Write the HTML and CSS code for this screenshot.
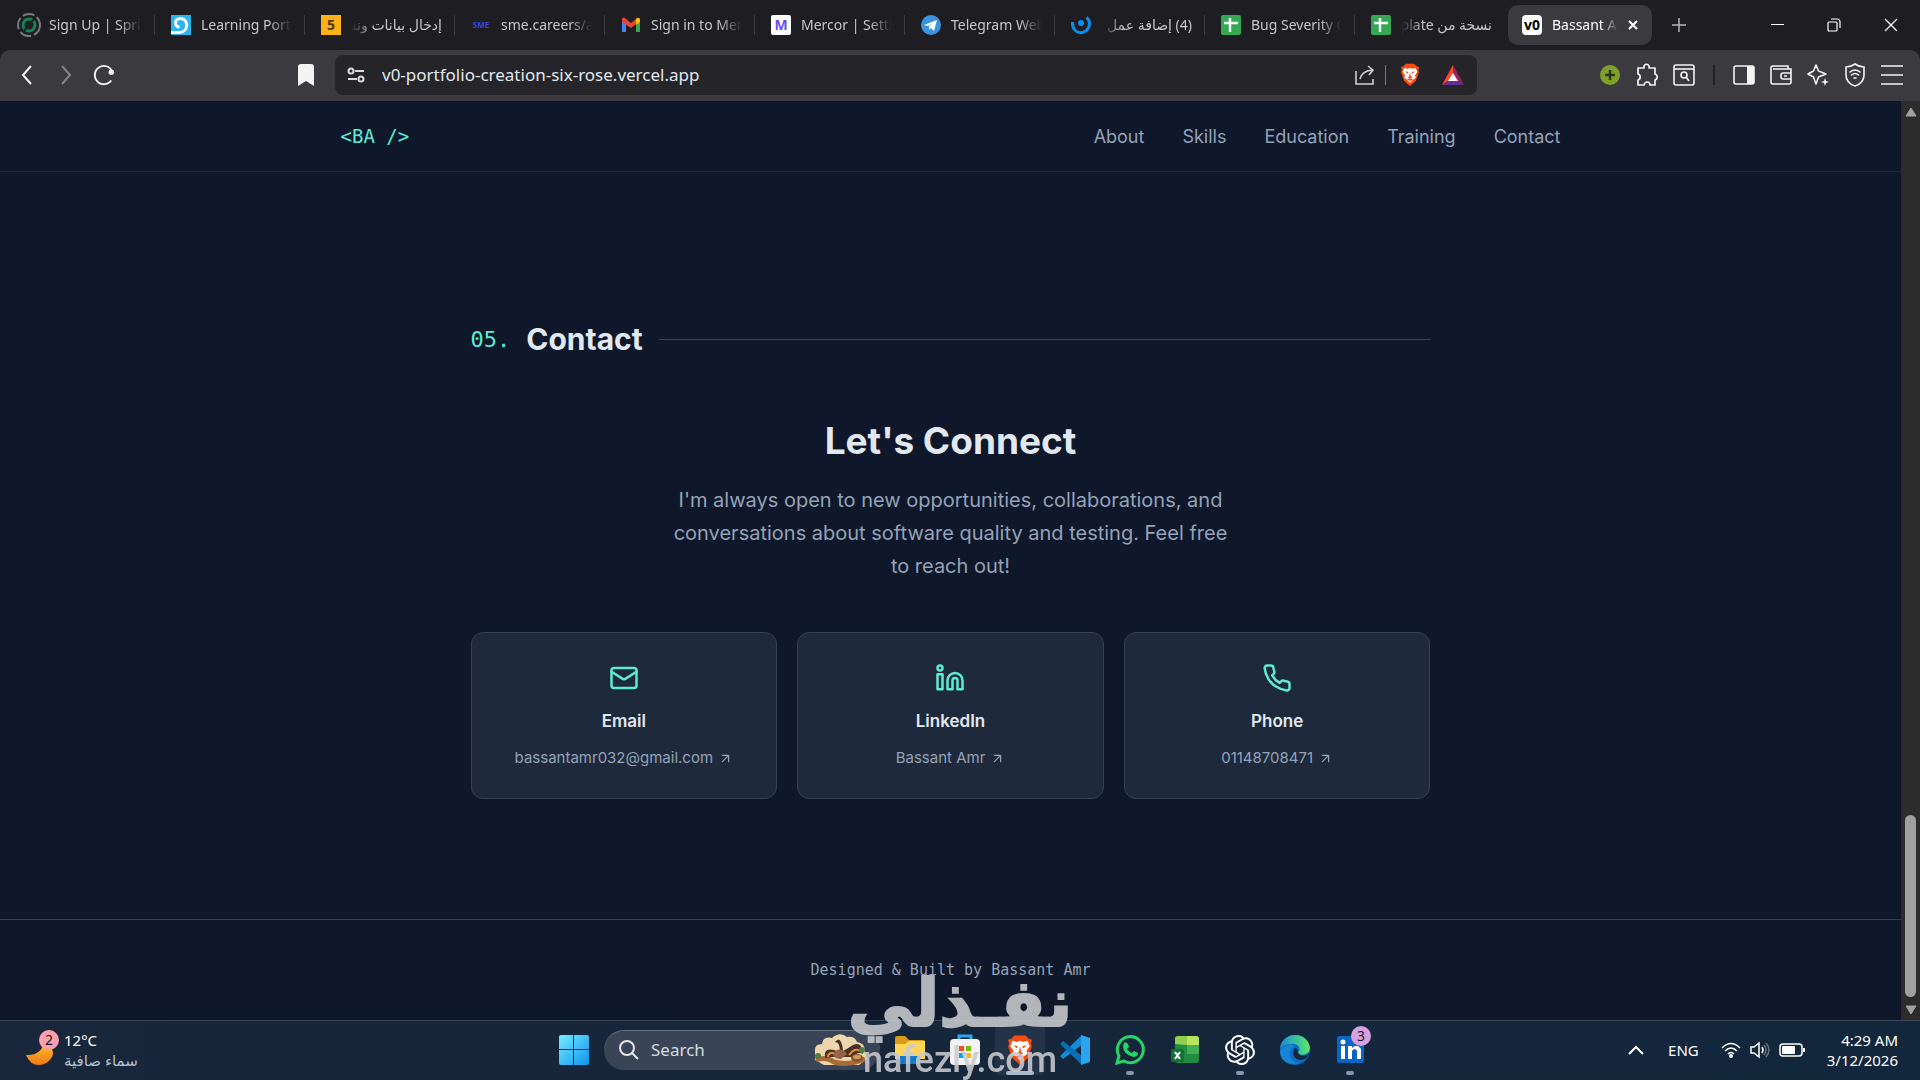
FILE: index.html
```html
<!DOCTYPE html>
<html lang="en">
<head>
<meta charset="utf-8">
<title>Bassant Amr</title>
<link rel="stylesheet" href="styles.css">
</head>
<body>
<svg class="sprites" width="0" height="0" aria-hidden="true">
  <symbol id="sheet" viewBox="0 0 20 20"><rect width="20" height="20" rx="2" fill="#34a853"/><path d="M3 8h14M9 3v14" stroke="#fff" stroke-width="2.4"/></symbol>
  <symbol id="brave" viewBox="0 0 24 28"><path d="M7 1h10l3 3 3 1-1 4 1 2-4 11-7 6-7-6L1 11l1-2-1-4 3-1z" fill="#fb4a0b"/><path d="M5 6l4 1 3-1 3 1 4-1 2 5-3 4 1 3-3 2-4 4-4-4-3-2 1-3-3-4z" fill="#fff"/><path d="M6 10l4 1-1 2zM18 10l-4 1 1 2zM12 11l1 5 2 2-3 1-3-1 2-2zM8 20l4-1 4 1-4 2z" fill="#fb4a0b"/></symbol>
  <symbol id="arrow" viewBox="0 0 24 24"><path d="M7 7h10v10M7 17 17 7" fill="none" stroke="currentColor" stroke-width="2" stroke-linecap="round" stroke-linejoin="round"/></symbol>
</svg>

<header class="browser">
  <nav class="tabs" aria-label="Open tabs">
    <button class="tab"><svg class="fav" viewBox="0 0 24 24"><g fill="none"><circle cx="12" cy="12" r="11" stroke="#777a7d" stroke-width="2" stroke-dasharray="12 3"/><circle cx="12" cy="12" r="6" stroke="#158257" stroke-width="3"/><path d="M7 18 17 6" stroke="#222" stroke-width="2"/></g></svg><span class="tab-text">Sign Up | Sprints</span></button>
    <button class="tab"><svg class="fav" viewBox="0 0 20 20"><rect width="20" height="20" fill="#2bb5ee"/><path d="M0 17.500h8c10 0 10-14 1.500-14-7 0-6 8.500-1 8.500" fill="none" stroke="#fff" stroke-width="3"/></svg><span class="tab-text">Learning Portal</span></button>
    <button class="tab"><span class="fav five">5</span><span class="tab-text" dir="rtl">إدخال بيانات ونسخ</span></button>
    <button class="tab"><span class="fav sme">SME</span><span class="tab-text">sme.careers/assess</span></button>
    <button class="tab"><svg class="fav" viewBox="0 0 20 20"><path d="M1 4v13h4V8z" fill="#4285f4"/><path d="M15 8v9h4V4z" fill="#34a853"/><path d="M15 4v6l4-3V5q0-3-3-2z" fill="#fbbc04"/><path d="M1 4q0-2 3-1l6 5 5-4v5l-5 4-9-6z" fill="#ea4335"/></svg><span class="tab-text">Sign in to Mercor</span></button>
    <button class="tab"><span class="fav mercor">M</span><span class="tab-text">Mercor | Settings</span></button>
    <button class="tab"><svg class="fav" viewBox="0 0 20 20"><circle cx="10" cy="10" r="10" fill="#3b93df"/><path d="M3 10l13-5-3 11-3-3-2 2v-4l5-4-6 4z" fill="#fff"/></svg><span class="tab-text">Telegram Web App</span></button>
    <button class="tab"><svg class="fav" viewBox="0 0 20 20"><path d="M1.500 7c-1 14 16 14 17 2 0-3-1-5-3-6.500" fill="none" stroke="#0b8cf0" stroke-width="3"/><circle cx="10" cy="8" r="3" fill="#0b8cf0"/></svg><span class="tab-text" dir="rtl">(4) إضافة عمل جديد</span></button>
    <button class="tab"><svg class="fav"><use href="#sheet"/></svg><span class="tab-text">Bug Severity Guide</span></button>
    <button class="tab"><svg class="fav"><use href="#sheet"/></svg><span class="tab-text" dir="rtl">نسخة من template</span></button>
    <button class="tab active"><span class="fav vzero">v0</span><span class="tab-text">Bassant Amr</span><svg class="tab-close" viewBox="0 0 10 10"><path d="M1 1l8 8M9 1 1 9" stroke="#fff" stroke-width="2"/></svg></button>
    <button class="icon-btn new-tab" aria-label="New tab"><svg width="14" height="14" viewBox="0 0 14 14"><path d="M7 0v14M0 7h14" stroke="#b5b5b8" stroke-width="1.5"/></svg></button>
    <div class="window-controls">
      <button class="icon-btn" aria-label="Minimize"><svg width="14" height="14" viewBox="0 0 14 14"><path d="M1 6.500h13" stroke="#fff" stroke-width="1"/></svg></button>
      <button class="icon-btn" aria-label="Restore"><svg width="14" height="14" viewBox="0 0 14 14" fill="none" stroke="#fff" stroke-width="1.2"><rect x="1" y="4" width="9" height="9" rx="1"/><path d="M4 1h6q3 0 3 3v6"/></svg></button>
      <button class="icon-btn" aria-label="Close"><svg width="14" height="14" viewBox="0 0 14 14"><path d="M1 1l12 12M13 1 1 13" stroke="#fff" stroke-width="1.200"/></svg></button>
    </div>
  </nav>

  <div class="toolbar">
    <div class="history">
      <button class="icon-btn" aria-label="Back"><svg width="24" height="24" viewBox="0 0 24 24" fill="none" stroke="#f4f4f5" stroke-width="2"><path d="M15 3 7 12l8 9"/></svg></button>
      <button class="icon-btn" aria-label="Forward"><svg width="24" height="24" viewBox="0 0 24 24" fill="none" stroke="#858588" stroke-width="2"><path d="M8 3l8 9-8 9"/></svg></button>
      <button class="icon-btn" aria-label="Reload"><svg width="22" height="24" viewBox="0 0 24 24"><path d="M20 18A10 10 0 1 1 19 5l2 4" fill="none" stroke="#f4f4f5" stroke-width="2"/><circle cx="20" cy="9" r="3" fill="#f4f4f5"/></svg></button>
    </div>
    <button class="icon-btn bookmark" aria-label="Bookmark"><svg width="16" height="22" viewBox="0 0 16 22"><path d="M3 0h10q3 0 3 3v19l-8-5-8 5V3q0-3 3-3z" fill="#f4f4f5"/></svg></button>
    <div class="address">
      <svg width="18" height="16" viewBox="0 0 18 16" fill="none" stroke="#d8d8da" stroke-width="2"><circle cx="4" cy="4" r="2.500"/><path d="M8 4h9M1 12h9"/><circle cx="14" cy="12" r="2.500"/></svg>
      <input class="url" type="text" aria-label="Address" value="v0-portfolio-creation-six-rose.vercel.app">
      <button class="icon-btn" aria-label="Share"><svg width="20" height="20" viewBox="0 0 20 20" fill="none" stroke="#cfcfd1" stroke-width="1.600"><path d="M1 6v13h17v-5M5 14c1-5 4-8 12-9M13 1l5 4-4 5"/></svg></button>
      <span class="rule light"></span>
      <button class="icon-btn brave-shield" aria-label="Shields"><svg width="20" height="23"><use href="#brave"/></svg></button>
      <button class="icon-btn" aria-label="Rewards"><svg width="22" height="20" viewBox="0 0 22 20"><path d="M11 0 0 20l11-7z" fill="#ff4724"/><path d="M11 0l11 20-11-7z" fill="#9e1f63"/><path d="M0 20h22l-11-8z" fill="#662d91"/><path d="M11 8l5 8H6z" fill="#fff"/></svg></button>
    </div>
    <div class="extensions">
      <button class="icon-btn" aria-label="Add"><svg width="20" height="20" viewBox="0 0 20 20"><circle cx="10" cy="10" r="10" fill="#7f9f28"/><path d="M10 5v10M5 10h10" stroke="#29331a" stroke-width="2.400"/></svg></button>
      <button class="icon-btn" aria-label="Extensions"><svg width="22" height="24" viewBox="0 0 22 24" fill="none" stroke="#f4f4f5" stroke-width="1.700" stroke-linejoin="round"><path d="M2 5h6c-1-5 6-5 5 0h6v6c3 1 3 5 0 6v5h-5c0-4-5-4-6 0H2v-5c3-1 3-5 0-6z"/></svg></button>
      <button class="icon-btn" aria-label="Search tabs"><svg width="22" height="22" viewBox="0 0 22 22" fill="none" stroke="#f4f4f5" stroke-width="1.600"><rect x="1" y="1" width="20" height="20" rx="2"/><path d="M1 5h20"/><circle cx="11" cy="11" r="3"/><path d="M13 13l3 4"/></svg></button>
      <span class="rule dark"></span>
      <button class="icon-btn" aria-label="Sidebar"><svg width="22" height="22" viewBox="0 0 22 22"><rect x="1" y="2" width="20" height="18" rx="2" fill="none" stroke="#f4f4f5" stroke-width="1.600"/><path d="M14 2h7v18h-7z" fill="#f4f4f5"/></svg></button>
      <button class="icon-btn" aria-label="Wallet"><svg width="22" height="22" viewBox="0 0 22 22" fill="none" stroke="#f4f4f5" stroke-width="1.600"><path d="M18 5V2H3Q1 2 1 4v14q0 2 2 2h16q2 0 2-2V5H3M21 9h-8q-2 0-2 2v2q0 2 2 2h8M14 12h3"/></svg></button>
      <button class="icon-btn" aria-label="Leo AI"><svg width="24" height="24" viewBox="0 0 24 24" fill="none" stroke="#f4f4f5" stroke-width="1.600" stroke-linejoin="round"><path d="M10 2l2.500 6 7.500 3-7.500 3-2.500 7-2.500-7L2 11l5.500-3z"/><path d="M19 15l1 3 3 1-3 1-1 3-1-3-3-1 3-1z" fill="#f4f4f5" stroke="none"/></svg></button>
      <button class="icon-btn" aria-label="VPN"><svg width="22" height="24" viewBox="0 0 22 24" fill="none" stroke="#f4f4f5" stroke-width="1.600" stroke-linecap="round"><path d="M11 1q4 3 9 3v8q0 8-9 11Q2 20 2 12V4q5 0 9-3z"/><path d="M6 9q5-4 10 0M7.500 12q3.500-3 7 0M10 15h2"/></svg></button>
      <button class="icon-btn" aria-label="Menu"><svg width="22" height="20" viewBox="0 0 22 20" stroke="#f4f4f5" stroke-width="1.600"><path d="M0 1h22M0 10h22M0 19h22"/></svg></button>
    </div>
  </div>
</header>

<div class="viewport">
  <div class="site">
    <header class="site-header">
      <div class="site-bar">
        <a class="logo" href="#">&lt;BA /&gt;</a>
        <nav class="site-nav">
          <a href="#about">About</a><a href="#skills">Skills</a><a href="#education">Education</a><a href="#training">Training</a><a href="#contact">Contact</a>
        </nav>
      </div>
    </header>

    <main class="contact" id="contact">
      <div class="section-title"><span class="number">05.</span><h2>Contact</h2><span class="line"></span></div>
      <h3>Let's Connect</h3>
      <p class="lead">I'm always open to new opportunities, collaborations, and conversations about software quality and testing. Feel free to reach out!</p>
      <div class="cards">
        <a class="card" href="mailto:bassantamr032@gmail.com">
          <svg class="card-icon" viewBox="0 0 24 24"><rect x="2" y="4" width="20" height="16" rx="2"/><path d="m22 7-8.970 5.700a1.940 1.940 0 0 1-2.060 0L2 7"/></svg>
          <span class="card-title">Email</span>
          <span class="card-text">bassantamr032@gmail.com <svg width="15" height="15"><use href="#arrow"/></svg></span>
        </a>
        <a class="card" href="#linkedin">
          <svg class="card-icon" viewBox="0 0 24 24"><path d="M16 8a6 6 0 0 1 6 6v7h-4v-7a2 2 0 0 0-4 0v7h-4v-7a6 6 0 0 1 6-6z"/><rect x="2" y="9" width="4" height="12"/><circle cx="4" cy="4" r="2"/></svg>
          <span class="card-title">LinkedIn</span>
          <span class="card-text">Bassant Amr <svg width="15" height="15"><use href="#arrow"/></svg></span>
        </a>
        <a class="card" href="tel:01148708471">
          <svg class="card-icon" viewBox="0 0 24 24"><path d="M22 16.920v3a2 2 0 0 1-2.180 2 19.790 19.790 0 0 1-8.630-3.070 19.500 19.500 0 0 1-6-6 19.790 19.790 0 0 1-3.070-8.670A2 2 0 0 1 4.110 2h3a2 2 0 0 1 2 1.720 12.840 12.840 0 0 0 .7 2.810 2 2 0 0 1-.45 2.110L8.090 9.910a16 16 0 0 0 6 6l1.270-1.270a2 2 0 0 1 2.110-.45 12.840 12.840 0 0 0 2.810.7A2 2 0 0 1 22 16.920z"/></svg>
          <span class="card-title">Phone</span>
          <span class="card-text">01148708471 <svg width="15" height="15"><use href="#arrow"/></svg></span>
        </a>
      </div>
    </main>

    <footer class="site-footer">Designed &amp; Built by Bassant Amr</footer>
  </div>
  <div class="scrollbar" aria-hidden="true">
    <svg width="12" height="10" viewBox="0 0 12 10"><path d="M6 1l5 8H1z" fill="#a0a0a0" stroke="#a0a0a0" stroke-linejoin="round"/></svg>
    <span class="thumb"></span>
    <svg width="12" height="10" viewBox="0 0 12 10"><path d="M6 9 1 1h10z" fill="#a0a0a0" stroke="#a0a0a0" stroke-linejoin="round"/></svg>
  </div>
</div>

<footer class="taskbar">
  <button class="weather">
    <span class="moon"><svg width="28" height="28" viewBox="0 0 28 28"><defs><linearGradient id="mg" x2="0" y2="1"><stop stop-color="#ffc928"/><stop offset="1" stop-color="#f07818"/></linearGradient></defs><path d="M0 18Q15 19 19 4q11 9 7 16Q21 28 13 28 4 28 0 18z" fill="url(#mg)"/></svg><span class="badge pink">2</span></span>
    <span class="weather-text"><span>12°C</span><span class="sky" dir="rtl">سماء صافية</span></span>
  </button>

  <div class="launcher">
    <button class="app" aria-label="Start"><svg width="30" height="30" viewBox="0 0 30 30"><defs><linearGradient id="wg" x2="1" y2="1"><stop stop-color="#74edff"/><stop offset="1" stop-color="#1093f0"/></linearGradient></defs><path d="M2 0h12v14H0V2q0-2 2-2zM15 0h13q2 0 2 2v12H15zM0 15h14v15H2q-2 0-2-2zM15 15h15v13q0 2-2 2H15z" fill="url(#wg)"/></svg></button>
    <div class="search">
      <svg width="20" height="20" viewBox="0 0 20 20" fill="none" stroke="#e3e6ea" stroke-width="2"><circle cx="8" cy="8" r="7"/><path d="M13 13l6 6"/></svg>
      <input type="text" aria-label="Search" placeholder="Search">
      <svg class="art" width="54" height="32" viewBox="0 0 54 32"><path d="M1 18Q0 10 8 10 9 2 18 4 26-3 33 3q8-1 10 5 8 1 8 9l2 8-8 6H10L1 26z" fill="#ecd6ad"/><path d="M2 26q10-4 18 2 14 4 31-3" stroke="#a86c38" stroke-width="5" fill="none"/><path d="M11 24Q9 11 25 18q2-3-1-9l-3-1q4-5 6 0 2 4 2 9 4-2 10-6 9-4 10 9-5-3-11 3H18z" fill="#4a3022"/><path d="M14 23q0-6 9-3M35 21q6-8 11-4" stroke="#e29336" stroke-width="2" fill="none"/><path d="M21 17q8-4 12 3l-6 5q-6 0-8-4z" fill="#966247"/><ellipse cx="43" cy="24" rx="6" ry="4" fill="#8b5428"/><ellipse cx="43" cy="23" rx="4" ry="2" fill="#d49a5b"/><circle cx="4" cy="22" r="3" fill="#557c3d"/><circle cx="48" cy="16" r="3" fill="#557c3d"/></svg>
    </div>
    <button class="app" aria-label="Files"><svg width="30" height="28" viewBox="0 0 30 28"><path d="M0 2q0-2 2-2h8l4 4h14q2 0 2 2v4H0z" fill="#d89b18"/><path d="M0 8h10l4-3h16v18H0z" fill="#ffd65a"/><path d="M5 20h20v8H5z" fill="#1479cc"/></svg></button>
    <button class="app" aria-label="Store"><svg width="30" height="32" viewBox="0 0 30 32"><path d="M9 8V2h12v6" fill="none" stroke="#28a8ef" stroke-width="3"/><rect y="5" width="30" height="26" rx="4" fill="#f3f3f3"/><path d="M9 12h5v5H9z" fill="#f25022"/><path d="M16 12h5v5h-5z" fill="#7fba00"/><path d="M9 19h5v5H9z" fill="#00a4ef"/><path d="M16 19h5v5h-5z" fill="#ffb900"/></svg></button>
    <button class="app current" aria-label="Brave"><svg width="26" height="31"><use href="#brave"/></svg></button>
    <button class="app" aria-label="VS Code"><svg width="30" height="30" viewBox="0 0 30 30"><path d="M22 0 0 21l3 3L23 9z" fill="#168bd5"/><path d="M3 6 0 9l22 21V21z" fill="#0870b9"/><path d="M21 0l9 3v24l-9 3z" fill="#28a7ef"/></svg></button>
    <button class="app open" aria-label="WhatsApp"><svg width="30" height="30" viewBox="0 0 30 30"><path d="M2 28l2-7A13 13 0 1 1 9 26z" fill="none" stroke="#25d366" stroke-width="3"/><path d="M9 8q2-2 4 1l1 3-2 2q2 3 5 4l2-2 4 2q0 4-5 4Q8 19 8 11z" fill="#25d366"/></svg></button>
    <button class="app" aria-label="Excel"><svg width="28" height="28" viewBox="0 0 28 28"><rect x="4" width="24" height="27" rx="3" fill="#218c40"/><path d="M4 8V3q0-3 3-3h9v9z" fill="#90cf4b"/><path d="M16 0h9q3 0 3 3v6H16z" fill="#b7e35d"/><path d="M16 9h12v9H16z" fill="#43b057"/><rect y="13" width="13" height="13" rx="2" fill="#137238"/><path d="M4 16l5 7M9 16l-5 7" stroke="#fff" stroke-width="2"/></svg></button>
    <button class="app open" aria-label="ChatGPT"><svg width="30" height="30" viewBox="0 0 24 24"><path fill="#fff" d="M22.282 9.821a5.985 5.985 0 0 0-.516-4.910 6.046 6.046 0 0 0-6.510-2.900A6.065 6.065 0 0 0 4.981 4.182a5.985 5.985 0 0 0-3.998 2.900 6.046 6.046 0 0 0 .743 7.097 5.980 5.980 0 0 0 .510 4.911 6.051 6.051 0 0 0 6.515 2.900A5.985 5.985 0 0 0 13.260 24a6.056 6.056 0 0 0 5.772-4.206 5.990 5.990 0 0 0 3.998-2.900 6.056 6.056 0 0 0-.748-7.073zM13.260 22.430a4.476 4.476 0 0 1-2.876-1.040l.141-.081 4.779-2.758a.795.795 0 0 0 .393-.681v-6.737l2.020 1.169a.071.071 0 0 1 .038.052v5.583a4.504 4.504 0 0 1-4.495 4.494zM3.600 18.304a4.470 4.470 0 0 1-.535-3.014l.142.085 4.783 2.759a.771.771 0 0 0 .780 0l5.843-3.369v2.332a.080.080 0 0 1-.033.062L9.740 19.950a4.500 4.500 0 0 1-6.140-1.646zM2.340 7.896a4.485 4.485 0 0 1 2.366-1.973V11.600a.766.766 0 0 0 .388.677l5.815 3.354-2.020 1.169a.076.076 0 0 1-.071 0l-4.830-2.786A4.504 4.504 0 0 1 2.340 7.872zm16.597 3.855l-5.833-3.387L15.119 7.200a.076.076 0 0 1 .071 0l4.830 2.791a4.494 4.494 0 0 1-.676 8.105v-5.678a.790.790 0 0 0-.407-.667zm2.010-3.023l-.141-.085-4.774-2.782a.776.776 0 0 0-.785 0L9.409 9.230V6.897a.066.066 0 0 1 .028-.061l4.830-2.787a4.499 4.499 0 0 1 6.680 4.660zM8.306 12.863l-2.020-1.164a.080.080 0 0 1-.038-.057V6.075a4.499 4.499 0 0 1 7.375-3.453l-.142.080L8.704 5.460a.795.795 0 0 0-.393.681zm1.097-2.365l2.602-1.500 2.607 1.500v2.999l-2.597 1.500-2.607-1.500z"/></svg></button>
    <button class="app" aria-label="Edge"><svg width="30" height="30" viewBox="0 0 30 30"><defs><linearGradient id="eg" x2="1"><stop stop-color="#168cdc"/><stop offset="1" stop-color="#5bea68"/></linearGradient></defs><circle cx="15" cy="15" r="15" fill="#0d6cc0"/><path d="M0 14C1-4 28-5 30 13c0 6-9 9-12 5 4-5-1-10-6-9Q3 9 0 14z" fill="url(#eg)"/><path d="M18 18c3 4 9 3 11 0-1 5-5 7-8 7-7 0-10-7-6-12 4 1 2 3 3 5z" fill="#13263a"/><path d="M12 13c-5 6-1 14 7 15-14 5-23-9-17-15 4-4 8-4 13-2z" fill="#1683d5"/></svg></button>
    <button class="app open" aria-label="LinkedIn"><svg width="27" height="27" viewBox="0 0 27 27"><rect width="27" height="27" rx="2" fill="#0a66c2"/><path d="M4 10h4v13H4zM11 10h4v2q5-5 9 1v10h-4v-8q-2-4-5 0v8h-4z" fill="#fff"/><circle cx="6" cy="6" r="2.500" fill="#fff"/></svg><span class="badge violet">3</span></button>
  </div>

  <div class="tray">
    <button class="icon-btn" aria-label="Hidden icons"><svg width="16" height="10" viewBox="0 0 16 10" fill="none" stroke="#fff" stroke-width="2"><path d="M1 9l7-7 7 7"/></svg></button>
    <button class="language">ENG</button>
    <button class="status" aria-label="Network, volume, battery">
      <svg width="20" height="16" viewBox="0 0 20 16" fill="none" stroke="#fff" stroke-width="1.600"><path d="M1 6q9-9 18 0M4 9q6-6 12 0M7 12q3-3 6 0"/><circle cx="10" cy="14" r="1.200" fill="#fff"/></svg>
      <svg width="20" height="18" viewBox="0 0 20 18" fill="none" stroke="#fff" stroke-width="1.500"><path d="M1 6h3l5-4v14l-5-4H1z"/><path d="M12 6q2 3 0 6"/><path d="M14 4q4 5 0 10M16 2q6 7 0 14" stroke="#66727f"/></svg>
      <svg width="26" height="14" viewBox="0 0 26 14"><rect x="1" y="1" width="22" height="12" rx="3" fill="none" stroke="#fff" stroke-width="1.500"/><rect x="3" y="3" width="13" height="8" rx="1" fill="#fff"/><path d="M25 5v4" stroke="#fff" stroke-width="2"/></svg>
    </button>
    <button class="clock"><span>4:29 AM</span><span>3/12/2026</span></button>
  </div>
</footer>

<div class="watermark"><span class="mark-ar" lang="ar" dir="rtl">نفـذلي</span><span class="mark-en">nafezly.com</span></div>
</body>
</html>
```
FILE: styles.css
```css
* { box-sizing: border-box; }

body {
  margin: 0;
  min-height: 100vh;
  display: flex;
  flex-direction: column;
  position: relative;
  overflow: hidden;
  background: #0f172a;
  color: #e2e8f0;
  font-family: "Noto Sans", "Open Sans", "DejaVu Sans", sans-serif;
}

button {
  margin: 0;
  padding: 0;
  border: 0;
  background: none;
  color: inherit;
  font: inherit;
}

input {
  min-width: 0;
  padding: 0;
  border: 0;
  outline: 0;
  background: none;
  color: inherit;
  font: inherit;
}

a { color: inherit; text-decoration: none; }
svg { display: block; flex: none; }
.sprites { position: absolute; }

/* Browser window */
.browser { background: #1e1e22; }

.tabs {
  display: flex;
  align-items: center;
  height: 50px;
  padding-left: 5px;
}

.tab {
  display: flex;
  align-items: center;
  gap: 10px;
  flex: 0 1 150px;
  min-width: 0;
  height: 20px;
  padding: 0 12px 0 16px;
  border-right: 1px solid #3c3c40;
  color: #c6c6c9;
  font-size: 14px;
  line-height: 20px;
}

.tab:first-child { padding-left: 12px; }
.tab:first-child .fav { width: 24px; height: 24px; }
.tab:first-child { gap: 8px; }
.tab:nth-child(10) { border-color: transparent; }

.tab-text {
  flex: 1;
  overflow: hidden;
  white-space: nowrap;
  text-align: left;
  mask-image: linear-gradient(to right, #000 75%, transparent);
}

.tab-text[dir="rtl"] {
  text-align: right;
  mask-image: linear-gradient(to left, #000 75%, transparent);
}

.tab.active {
  flex-basis: 144px;
  height: 40px;
  margin-left: 3px;
  padding: 0 14px;
  border: 0;
  border-radius: 10px;
  background: #3b3b3f;
  color: #fff;
}

.tab-close { width: 10px; height: 10px; }

.fav {
  width: 20px;
  height: 20px;
  flex: none;
  font: bold 14px/20px "Open Sans", sans-serif;
  text-align: center;
}

.five { background: #fbb117; color: #4a3a10; }
.sme { color: #3345e8; font-size: 8px; }
.mercor { border-radius: 2px; background: #fff; color: #6a4cf0; }
.vzero { border-radius: 4px; background: #fff; color: #000; }

.icon-btn {
  display: grid;
  place-items: center;
  flex: none;
  width: 24px;
  height: 24px;
}

.new-tab { margin-left: 15px; }
.window-controls { display: flex; gap: 33px; margin-left: auto; padding-right: 17px; }

.toolbar {
  display: flex;
  align-items: center;
  height: 51px;
  padding: 0 16px 2px;
  border-radius: 10px 10px 0 0;
  background: #3b3b3f;
}

.history { display: flex; flex: 0 1 278px; gap: 14px; }
.bookmark { margin-right: 17px; }

.address {
  display: flex;
  align-items: center;
  flex: 0 1 1142px;
  height: 40px;
  padding: 0 12px;
  border-radius: 8px;
  background: #252529;
}

.url {
  flex: 1;
  margin-left: 17px;
  font-size: 17px;
  line-height: 24px;
}

.rule { width: 1px; height: 20px; }
.rule.light { margin: 0 12px 0 8px; background: #77777a; }
.rule.dark { width: 2px; margin: 0 4px; background: #222225; }
.brave-shield { margin-right: 19px; }
.extensions { display: flex; align-items: center; gap: 13px; margin-left: auto; }

/* Portfolio page */
.viewport { display: flex; flex: 1; }

.site {
  display: flex;
  flex: 1;
  flex-direction: column;
  min-width: 0;
  font-family: Inter, sans-serif;
}

.site-header { border-bottom: 1px solid #1e293b; }

.site-bar {
  display: flex;
  align-items: center;
  justify-content: space-between;
  max-width: 1280px;
  height: 70px;
  margin: 0 auto;
  padding: 0 30px;
}

.logo, .number, .site-footer { font-family: "DejaVu Sans Mono", monospace; }
.logo { color: #5eead4; font-size: 19px; }
.site-nav { display: flex; gap: 38px; color: #94a3b8; font-size: 18px; }

.contact {
  flex: 1;
  width: 100%;
  max-width: 1020px;
  margin: 0 auto;
  padding: 148px 30px 120px;
}

.section-title { display: flex; align-items: center; gap: 16px; }
.number { color: #5eead4; font-size: 22px; }
.section-title h2 { margin: 0; font-size: 30px; line-height: 38px; }
.line { flex: 1; height: 1px; background: #334155; }

.contact h3 {
  margin: 60px 0 20px;
  font-size: 37px;
  line-height: 46px;
  text-align: center;
}

.lead {
  max-width: 560px;
  margin: 0 auto 49px;
  color: #94a3b8;
  font-size: 20px;
  line-height: 33px;
  text-align: center;
}

.cards { display: grid; grid-template-columns: repeat(3, 1fr); gap: 20px; }

.card {
  display: flex;
  flex-direction: column;
  align-items: center;
  padding: 30px 16px 28px;
  border: 1px solid #334155;
  border-radius: 12px;
  background: #1e293b;
}

.card-icon {
  width: 30px;
  height: 30px;
  fill: none;
  stroke: #5eead4;
  stroke-width: 2;
  stroke-linecap: round;
  stroke-linejoin: round;
}

.card-title { margin: 14px 0 11px; font-size: 17px; font-weight: 600; line-height: 28px; }

.card-text {
  display: flex;
  align-items: center;
  gap: 5px;
  color: #94a3b8;
  font-size: 15px;
  line-height: 24px;
}

.site-footer {
  padding: 38px 30px;
  border-top: 1px solid #334155;
  color: #94a3b8;
  font-size: 15px;
  line-height: 24px;
  text-align: center;
}

.scrollbar {
  display: flex;
  flex-direction: column;
  align-items: center;
  width: 19px;
  padding: 6px 0 5px;
  background: #2c2c2c;
}

.thumb { width: 11px; height: 182px; margin: auto 0 8px; border-radius: 6px; background: #a0a0a0; }

/* Taskbar */
.taskbar {
  display: grid;
  grid-template-columns: 1fr auto 1fr;
  align-items: center;
  height: 60px;
  padding: 0 22px 2px 26px;
  border-top: 1px solid #3b4857;
  background: linear-gradient(90deg, #19263b, #16263b 50%, #12273b);
  color: #fff;
  font-size: 15px;
  line-height: 20px;
}

.weather { display: flex; align-items: center; gap: 8px; justify-self: start; text-align: left; }
.moon { position: relative; width: 30px; padding-top: 2px; }
.weather-text, .clock { display: flex; flex-direction: column; }
.sky { color: #b6c0cc; }

.badge {
  position: absolute;
  top: -5px;
  right: -3px;
  width: 20px;
  height: 20px;
  border-radius: 50%;
  color: #1b1b1b;
  font-size: 14px;
  line-height: 20px;
  text-align: center;
}

.pink { background: #ff9fae; }
.violet { top: 1px; right: 4px; background: #d7a0e3; }
.launcher { display: flex; align-items: center; gap: 5px; }

.app {
  position: relative;
  display: grid;
  place-items: center;
  width: 50px;
  height: 50px;
  border-radius: 5px;
}

.current { background: #25334a; }

.open::after, .current::after {
  content: "";
  position: absolute;
  bottom: 0;
  left: 50%;
  width: 8px;
  height: 4px;
  border-radius: 2px;
  background: #8996a9;
  transform: translateX(-50%);
}

.current::after { width: 28px; background: #aab6cc; }

.search {
  display: flex;
  align-items: center;
  gap: 12px;
  width: 276px;
  height: 40px;
  padding: 0 12px 0 15px;
  border-top: 1px solid #667080;
  border-radius: 20px;
  background: #394456;
  font-size: 17px;
}

.search input { flex: 1; }
.search input::placeholder { color: #d6dbe1; opacity: 1; }

.tray { display: flex; align-items: center; justify-self: end; }
.language { margin: 0 22px 0 20px; }
.status { display: flex; align-items: center; gap: 9px; margin-right: 22px; }
.clock { text-align: right; }

/* Overlaid watermark */
.watermark {
  position: absolute;
  bottom: 0;
  left: 50%;
  display: flex;
  flex-direction: column;
  align-items: center;
  transform: translateX(-50%);
  color: #c9ccd0;
  opacity: 0.88;
  pointer-events: none;
}

.mark-ar { font: bold 66px/72px "DejaVu Sans", sans-serif; -webkit-text-stroke: 2px #c9ccd0; }
.mark-en { font: 500 36px/40px Roboto, sans-serif; }
```
